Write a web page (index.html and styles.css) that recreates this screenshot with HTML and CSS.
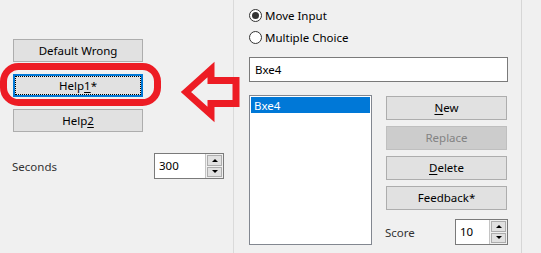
FILE: index.html
```html
<!DOCTYPE html>
<html>
<head>
<meta charset="utf-8">
<link rel="stylesheet" href="styles.css">
</head>
<body>
<div class="window">
  <div class="left">
    <div class="btn">Default Wrong</div>
    <div class="btn focused">Help<u>1</u>*</div>
    <div class="btn">Help<u>2</u></div>
    <div class="field-row seconds">
      <span class="label">Seconds</span>
      <div class="spin spin-wide">
        <span class="spin-text">300</span>
        <div class="spin-btns">
          <span class="spin-btn"><i class="tri up"></i></span>
          <span class="spin-btn"><i class="tri down"></i></span>
        </div>
      </div>
    </div>
  </div>
  <div class="right">
    <div class="radios">
      <label class="radio"><span class="dot checked"></span>Move Input</label>
      <label class="radio"><span class="dot"></span>Multiple Choice</label>
    </div>
    <div class="textbox">Bxe4</div>
    <div class="lower">
      <div class="listbox">
        <div class="item selected">Bxe4</div>
      </div>
      <div class="actions">
        <div class="btn small"><u>N</u>ew</div>
        <div class="btn small disabled">Replace</div>
        <div class="btn small"><u>D</u>elete</div>
        <div class="btn small">Feedback*</div>
        <div class="field-row score">
          <span class="label">Score</span>
          <div class="spin spin-narrow">
            <span class="spin-text">10</span>
            <div class="spin-btns">
              <span class="spin-btn"><i class="tri up"></i></span>
              <span class="spin-btn"><i class="tri down"></i></span>
            </div>
          </div>
        </div>
      </div>
    </div>
  </div>
  <div class="edge"></div>
</div>
<svg class="annot" width="541" height="253" viewBox="0 0 541 253">
  <rect x="3.5" y="66.5" width="154" height="36" rx="15" ry="15" fill="none" stroke="#ed1c24" stroke-width="7"/>
  <polygon points="186,92 211,69.5 211,80.5 236,80.5 236,103.5 211,103.5 211,114.5" fill="none" stroke="#ed1c24" stroke-width="7" stroke-linejoin="miter" stroke-miterlimit="3"/>
</svg>
</body>
</html>
```
FILE: styles.css
```css
html, body {
  margin: 0;
  padding: 0;
  background: #f0f0f0;
}
body {
  width: 541px;
  height: 253px;
  overflow: hidden;
  position: relative;
  font-family: "Noto Sans", "Open Sans", sans-serif;
  font-size: 11.5px;
  color: #000;
}
.window {
  display: flex;
  height: 253px;
}
.left {
  border-right: 1px solid #dadada;
  padding: 39px 0 0 13px;
  box-sizing: content-box;
  display: flex;
  flex-direction: column;
  gap: 12px;
  width: 220px;
}
.btn {
  box-sizing: border-box;
  width: 130px;
  height: 23px;
  border: 1px solid #adadad;
  background: #e1e1e1;
  display: flex;
  align-items: center;
  justify-content: center;
  line-height: 1;
}
.btn u {
  text-decoration: underline;
  text-underline-offset: 2px;
}
.btn.focused {
  border: 2px solid #0078d7;
  outline: 1px dotted #000;
  outline-offset: -3px;
}
.btn.disabled {
  background: #cccccc;
  border-color: #bfbfbf;
  color: #838383;
}
.field-row {
  display: flex;
  align-items: center;
  justify-content: space-between;
}
.seconds {
  margin-top: 9px;
  margin-left: -1px;
  width: 212px;
}
.label {
  color: #333;
}
.spin {
  box-sizing: border-box;
  display: flex;
  height: 26px;
  border: 1px solid #7a7a7a;
  background: #fff;
}
.spin-wide { width: 70px; }
.spin-narrow { width: 53px; }
.spin-text {
  flex: 1;
  padding-left: 4px;
  display: flex;
  align-items: center;
  padding-bottom: 2px;
}
.spin-btns {
  width: 17px;
  display: flex;
  flex-direction: column;
  background: #f0f0f0;
  border-left: 1px solid #c4c4c4;
}
.spin-btn {
  flex: 1;
  margin: 1px 1px 0 1px;
  border: 1px solid #adadad;
  background: #e1e1e1;
  display: flex;
  align-items: center;
  justify-content: center;
}
.spin-btn:last-child {
  margin-bottom: 1px;
}
.tri {
  width: 0;
  height: 0;
  border-left: 3px solid transparent;
  border-right: 3px solid transparent;
}
.tri.up { border-bottom: 3px solid #000; }
.tri.down { border-top: 3px solid #000; }
.right {
  width: 272px;
  border-right: 1px solid #d6d6d6;
  padding-left: 15px;
  display: flex;
  flex-direction: column;
}
.radios {
  padding-top: 9px;
  display: flex;
  flex-direction: column;
  gap: 9px;
}
.radio {
  display: flex;
  align-items: center;
  height: 13px;
  gap: 3px;
}
.dot {
  box-sizing: border-box;
  width: 13px;
  height: 13px;
  border-radius: 50%;
  border: 1px solid #333;
  background: #fff;
  display: flex;
  align-items: center;
  justify-content: center;
}
.dot.checked::after {
  content: "";
  width: 7px;
  height: 7px;
  border-radius: 50%;
  background: #333;
}
.textbox {
  box-sizing: border-box;
  margin-top: 13px;
  width: 259px;
  height: 25px;
  border: 1px solid #7a7a7a;
  background: #fff;
  padding: 0 0 1px 5px;
  display: flex;
  align-items: center;
}
.lower {
  margin-top: 13px;
  display: flex;
  gap: 14px;
}
.listbox {
  box-sizing: border-box;
  width: 123px;
  height: 150px;
  border: 1px solid #828790;
  background: #fff;
  padding: 1px;
}
.item {
  height: 16px;
  padding-left: 3px;
  display: flex;
  align-items: center;
}
.item.selected {
  background: #0078d7;
  color: #fff;
}
.actions {
  padding-top: 1px;
  display: flex;
  flex-direction: column;
  gap: 6px;
}
.btn.small {
  width: 121px;
  height: 24px;
}
.score {
  margin-top: 3px;
  margin-left: -1px;
  width: 123px;
}
.edge {
  flex: 1;
}
.annot {
  position: absolute;
  left: 0;
  top: 0;
  pointer-events: none;
}
```
